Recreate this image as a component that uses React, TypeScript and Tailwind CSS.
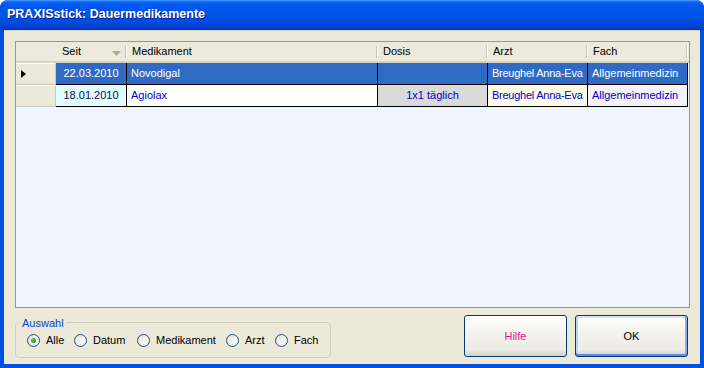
const columns = [
  { key: "seit", label: "Seit", width: "w-[71px]" },
  { key: "med", label: "Medikament", width: "w-[251px]" },
  { key: "dosis", label: "Dosis", width: "w-[110px]" },
  { key: "arzt", label: "Arzt", width: "w-[100px]" },
  { key: "fach", label: "Fach", width: "w-[100px]" },
];

const rows = [
  {
    seit: "22.03.2010",
    med: "Novodigal",
    dosis: "",
    arzt: "Breughel Anna-Eva",
    fach: "Allgemeinmedizin",
  },
  {
    seit: "18.01.2010",
    med: "Agiolax",
    dosis: "1x1 täglich",
    arzt: "Breughel Anna-Eva",
    fach: "Allgemeinmedizin",
  },
];

// radio label widths, taken from the spacing in the dialog
const radios = [
  { label: "Alle", w: "w-[47px]" },
  { label: "Datum", w: "w-[63px]" },
  { label: "Medikament", w: "w-[89px]" },
  { label: "Arzt", w: "w-[49px]" },
  { label: "Fach", w: "" },
];

function Radio({ checked }: { checked?: boolean }) {
  return (
    <span className="relative flex h-[13px] w-[13px] shrink-0 items-center justify-center rounded-full border border-[#1c5180] bg-[linear-gradient(135deg,#dcdcd7_0%,#ffffff_85%)]">
      {checked && (
        <span className="h-[5px] w-[5px] rounded-full bg-[radial-gradient(circle_at_35%_35%,#55d655,#21a121_60%,#1a7a1a)]" />
      )}
    </span>
  );
}

function HeaderSep() {
  return <span className="absolute right-0 top-[4px] h-[12px] w-[2px] border-l border-[#c7c5b2] bg-white" />;
}

export default function App() {
  return (
    <div
      className="flex h-[368px] w-[704px] flex-col overflow-hidden rounded-t-[8px] bg-[#0050e0] text-[11px] text-black"
      style={{ fontFamily: '"Liberation Sans", Arial, sans-serif' }}
    >
      {/* title bar */}
      <div className="flex h-[30px] shrink-0 items-center bg-[linear-gradient(180deg,#4a9bff_0px,#0a66f5_2px,#0058ee_5px,#0055e8_14px,#004cdd_22px,#0044d4_26px,#0036c0_30px)] pb-[2px] pl-[7px]">
        <span className="text-[12.5px] font-bold text-white [text-shadow:1px_1px_#0a1883]">
          PRAXISstick: Dauermedikamente
        </span>
      </div>

      {/* client area */}
      <div className="mx-[4px] mb-[4px] flex flex-1 flex-col border-t border-[#d8d4c0] bg-[#ece9d8] pl-[11px] pr-[10px] pt-[10px]">
        {/* grid */}
        <div className="flex h-[267px] flex-col border border-[#7f9db9] bg-[#eff5fd]">
          {/* header */}
          <div className="flex h-[21px] border-b-[2px] border-[#d6d2c2] bg-[#ebeadb]">
            <div className="relative w-[40px] shrink-0" />
            {columns.map((c, i) => (
              <div
                key={c.key}
                className={`relative flex shrink-0 items-center ${c.width} ${i === 0 ? "pl-[6px]" : "pl-[5px]"}`}
              >
                {c.label}
                {i === 0 && (
                  <svg className="absolute left-[56px] top-[9px]" width="9" height="5" viewBox="0 0 9 5">
                    <path d="M0 0 L9 0 L4.5 5 Z" fill="#aca899" />
                  </svg>
                )}
                <HeaderSep />
              </div>
            ))}
          </div>

          {/* rows */}
          {rows.map((r, idx) => {
            const sel = idx === 0;
            const cellBg = sel
              ? ["bg-[#316ac5]", "bg-[#316ac5]", "bg-[#316ac5]", "bg-[#316ac5]", "bg-[#316ac5]"]
              : ["bg-[#e2fdfd]", "bg-white", "bg-[#dadada]", "bg-[#fbfbe6]", "bg-[#f3f3f6]"];
            const textCol = sel
              ? ["text-white", "text-white", "text-white", "text-white", "text-white"]
              : ["text-[#0c0c48]", "text-[#0000c8]", "text-[#0000c8]", "text-[#0000c8]", "text-[#0000c8]"];
            return (
              <div key={idx} className="flex h-[22px]">
                <div className="flex w-[40px] shrink-0 items-center border-b border-r border-t border-b-[#cbc8b7] border-r-[#cbc8b7] border-t-white bg-[#ebe9da] pl-[5px]">
                  {sel && (
                    <svg width="5" height="8" viewBox="0 0 5 8">
                      <path d="M0 0 L5 4 L0 8 Z" fill="#000" />
                    </svg>
                  )}
                </div>
                {columns.map((c, i) => (
                  <div
                    key={c.key}
                    className={`flex shrink-0 items-center overflow-hidden whitespace-nowrap border-b border-r border-black ${c.width} ${cellBg[i]} ${textCol[i]} ${
                      i === 0 || i === 2 ? "justify-center" : "pl-[4px]"
                    } ${i === 3 ? "tracking-[-0.25px]" : ""}`}
                  >
                    {r[c.key as keyof typeof r]}
                  </div>
                ))}
              </div>
            );
          })}
        </div>

        {/* bottom */}
        <div className="mt-[7px] flex items-start justify-between">
          <div className="relative mt-[7px] flex h-[36px] w-[316px] items-center rounded-[4px] border border-[#d0d0bf] pl-[11px]">
            <span className="absolute -top-[8px] left-[4px] bg-[#ece9d8] px-[2px] text-[#0046d5]">Auswahl</span>
            {radios.map((r, i) => (
              <label key={r.label} className={`flex items-center gap-[6px] ${r.w}`}>
                <Radio checked={i === 0} />
                <span>{r.label}</span>
              </label>
            ))}
          </div>

          <div className="mr-[2px] flex gap-[8px]">
            <button className="flex h-[42px] w-[103px] items-center justify-center rounded-[3px] border border-[#003c74] bg-[linear-gradient(180deg,#ffffff_0%,#f5f4ef_40%,#ecebe5_85%,#d6d0c5_100%)] text-[#e8177f]">
              Hilfe
            </button>
            <button className="flex h-[42px] w-[113px] items-center justify-center rounded-[3px] border border-[#003c74] bg-[linear-gradient(180deg,#ffffff_0%,#f5f4ef_40%,#ecebe5_85%,#d6d0c5_100%)] shadow-[inset_0_-2px_0_#6982ee,inset_2px_0_0_#bcd4f6,inset_-2px_0_0_#89ade4,inset_0_2px_0_#cee7ff]">
              OK
            </button>
          </div>
        </div>
      </div>
    </div>
  );
}
